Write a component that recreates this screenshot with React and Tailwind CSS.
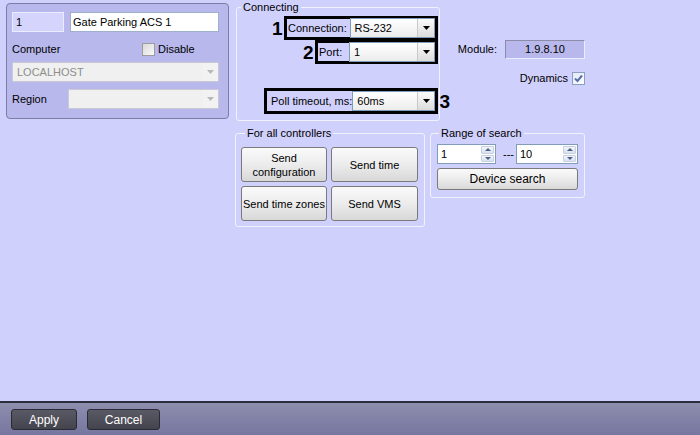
import React from 'react';

const font = { fontFamily: '"Liberation Sans", Arial, sans-serif' };

function Arrow({ disabled }) {
  return (
    <div className={`flex h-full w-[17px] items-center justify-center border-l ${disabled ? 'border-[#f0f0f0] bg-[#f2f2f2]' : 'border-[#c8c8c8] bg-gradient-to-b from-[#fbfbfb] to-[#dcdcdc]'}`}>
      <svg width="7" height="4" viewBox="0 0 7 4">
        <path d="M0 0 H7 L3.5 4 Z" fill={disabled ? '#b8b8b8' : '#000'} />
      </svg>
    </div>
  );
}

function Combo({ text, className, disabled }) {
  return (
    <div className={`flex items-center border ${disabled ? 'border-[#c9c9d6] bg-[#f0f0f0] text-[#8d8d8d]' : 'border-[#7f9db9] bg-gradient-to-b from-[#ffffff] to-[#ececec] text-black'} ${className}`}>
      <span className="flex-1 truncate pl-[4px] leading-none">{text}</span>
      <Arrow disabled={disabled} />
    </div>
  );
}

function Check({ checked }) {
  return (
    <div className={`flex h-[13px] w-[13px] items-center justify-center border ${checked ? 'border-[#8aa0c0] bg-gradient-to-br from-[#e4e8f8] to-[#ffffff]' : 'border-[#9c9c9c] bg-gradient-to-br from-[#d8d8d8] to-[#fafafa]'}`}>
      {checked && (
        <svg width="9" height="9" viewBox="0 0 9 9">
          <path d="M1 4.5 L3.5 7 L8 1.5" stroke="#5870a8" strokeWidth="2" fill="none" />
        </svg>
      )}
    </div>
  );
}

function Btn({ children, className }) {
  return (
    <div className={`flex items-center justify-center rounded-[3px] border border-[#7a7a7a] bg-gradient-to-b from-[#fafafa] via-[#ececec] to-[#d8d8d8] text-center leading-[14px] text-black ${className}`}>
      {children}
    </div>
  );
}

function Spin({ value, className }) {
  return (
    <div className={`flex h-[20px] border border-[#7f9db9] bg-white ${className}`}>
      <span className="flex-1 pl-[3px] leading-[18px]">{value}</span>
      <div className="flex w-[15px] flex-col gap-[1px] p-[1px]">
        <div className="flex flex-1 items-center justify-center rounded-[1px] border border-[#c8d0e0] bg-gradient-to-b from-[#f4f6fc] to-[#d8e0f0]">
          <svg width="6" height="3" viewBox="0 0 6 3"><path d="M0 3 L3 0 L6 3 Z" fill="#4d6185" /></svg>
        </div>
        <div className="flex flex-1 items-center justify-center rounded-[1px] border border-[#c8d0e0] bg-gradient-to-b from-[#f4f6fc] to-[#d8e0f0]">
          <svg width="6" height="3" viewBox="0 0 6 3"><path d="M0 0 H6 L3 3 Z" fill="#4d6185" /></svg>
        </div>
      </div>
    </div>
  );
}

function Num({ n, className }) {
  return (
    <span className={`absolute top-1/2 -translate-y-1/2 text-[19px] font-bold leading-none text-black ${className}`}>{n}</span>
  );
}

export default function App() {
  return (
    <div style={font} className="flex h-[435px] w-[700px] flex-col overflow-hidden bg-[#d0d0fc] text-[11px] text-black">
      <div className="flex flex-1 items-start">
        {/* left card */}
        <div className="ml-[6px] mt-[3px] h-[116px] w-[223px] rounded-[4px] border border-[#7c7ca4] bg-[#b8b8ec] px-[5px] pt-[8px]">
          <div className="flex gap-[6px]">
            <div className="h-[20px] w-[52px] border border-[#ececff] bg-[#d4d4fc] pl-[3px] leading-[18px]">1</div>
            <div className="h-[20px] w-[149px] border border-[#9fb0cc] bg-white pl-[2px] leading-[18px]">Gate Parking ACS 1</div>
          </div>
          <div className="mt-[10px] flex h-[14px] items-center">
            <span className="w-[130px]">Computer</span>
            <Check />
            <span className="ml-[3px]">Disable</span>
          </div>
          <Combo disabled text="LOCALHOST" className="mt-[6px] h-[20px] w-[207px]" />
          <div className="mt-[7px] flex items-center">
            <span className="w-[56px]">Region</span>
            <Combo disabled text="" className="h-[20px] w-[151px]" />
          </div>
        </div>

        <div className="ml-[7px] mt-[1px] flex flex-col">
          <div className="flex">
            {/* Connecting */}
            <fieldset className="h-[120px] w-[204px] rounded-[3px] border border-[#f2f2ff] pr-[1px]">
              <legend className="ml-[4px] px-[2px] leading-[12px]">Connecting</legend>
              <div className="flex flex-col items-end">
                <div className="relative mt-[3px] flex h-[24px] w-[154px] items-center border-[3px] border-black pl-[1px]">
                  <Num n="1" className="-left-[15px]" />
                  <span className="w-[62px]">Connection:</span>
                  <Combo text="RS-232" className="h-[20px] w-[86px]" />
                </div>
                <div className="relative flex h-[24px] w-[123px] items-center border-[3px] border-black">
                  <Num n="2" className="-left-[15px]" />
                  <span className="w-[31px] pl-[1px]">Port:</span>
                  <Combo text="1" className="h-[20px] w-[86px]" />
                </div>
                <div className="relative mt-[24px] flex h-[26px] w-[174px] items-center border-[3px] border-black pl-[4px]">
                  <Num n="3" className="-right-[15px]" />
                  <span className="w-[82px] whitespace-nowrap">Poll timeout, ms:</span>
                  <Combo text="60ms" className="h-[20px] w-[84px]" />
                </div>
              </div>
            </fieldset>

            {/* module */}
            <div className="ml-[19px] mt-[39px] flex w-[126px] flex-col items-end">
              <div className="flex items-center">
                <span className="mr-[8px]">Module:</span>
                <div className="h-[19px] w-[80px] border border-t-[#8c8ca8] border-l-[#8c8ca8] border-r-[#ececff] border-b-[#ececff] bg-[#b8b8ec] text-center leading-[17px]">1.9.8.10</div>
              </div>
              <div className="mt-[11px] flex items-center">
                <span className="mr-[4px]">Dynamics</span>
                <Check checked />
              </div>
            </div>
          </div>

          <div className="mt-[6px] flex">
            <fieldset className="-ml-[1px] h-[100px] w-[190px] rounded-[3px] border border-[#f2f2ff] px-[5px]">
              <legend className="ml-[4px] px-[2px] leading-[12px]">For all controllers</legend>
              <div className="mt-[8px] grid grid-cols-[86px_87px] gap-x-[4px] gap-y-[4px]">
                <Btn className="h-[35px]">Send<br />configuration</Btn>
                <Btn className="h-[35px]">Send time</Btn>
                <Btn className="h-[35px]">Send time zones</Btn>
                <Btn className="h-[35px]">Send VMS</Btn>
              </div>
            </fieldset>
            <fieldset className="ml-[5px] h-[71px] w-[155px] min-w-0 rounded-[3px] border border-[#f2f2ff] px-[6px]">
              <legend className="ml-[2px] px-[2px] leading-[12px]">Range of search</legend>
              <div className="mt-[5px] flex items-center">
                <Spin value="1" className="w-[59px]" />
                <span className="ml-[7px] w-[13px]">---</span>
                <Spin value="10" className="w-[62px]" />
              </div>
              <Btn className="mt-[4px] h-[22px] w-[141px] text-[12px]">Device search</Btn>
            </fieldset>
          </div>
        </div>
      </div>

      {/* bottom bar */}
      <div className="flex h-[34px] items-center gap-[10px] border-t-2 border-[#2c2c40] bg-gradient-to-b from-[#8e8eae] to-[#7676a0] pl-[11px] pt-[1px]">
        <div className="flex h-[21px] w-[66px] items-center justify-center rounded-[3px] border border-[#2a2a34] bg-gradient-to-b from-[#5a5a66] to-[#44444e] text-[12px] text-white">Apply</div>
        <div className="flex h-[21px] w-[73px] items-center justify-center rounded-[3px] border border-[#2a2a34] bg-gradient-to-b from-[#5a5a66] to-[#44444e] text-[12px] text-white">Cancel</div>
      </div>
    </div>
  );
}
